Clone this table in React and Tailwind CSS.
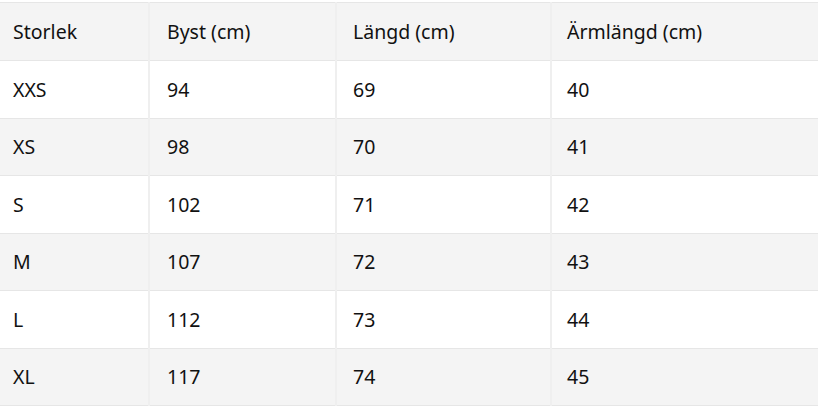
const headers = ["Storlek", "Byst (cm)", "Längd (cm)", "Ärmlängd (cm)"];

const rows = [
  ["XXS", "94", "69", "40"],
  ["XS", "98", "70", "41"],
  ["S", "102", "71", "42"],
  ["M", "107", "72", "43"],
  ["L", "112", "73", "44"],
  ["XL", "117", "74", "45"],
];

const widths = ["w-[149px]", "w-[187px]", "w-[215px]", "w-[267px]"];
const pads = ["pl-[13px]", "pl-[17px]", "pl-[16px]", "pl-[15px]"];

export default function App() {
  return (
    <div className="min-h-screen bg-white pt-[2px] font-['Noto_Sans','Open_Sans',sans-serif] text-[19.5px] text-[#111]">
      <table className="w-[818px] table-fixed border-collapse border-t border-[#e6e6e6]">
        <thead>
          <tr className="h-[58px] bg-[#f4f4f4] border-b border-[#e6e6e6]">
            {headers.map((h, i) => (
              <th
                key={h}
                className={`${widths[i]} ${pads[i]} text-left font-normal ${i > 0 ? "border-l-2 border-[#efefef]" : ""}`}
              >
                {h}
              </th>
            ))}
          </tr>
        </thead>
        <tbody>
          {rows.map((r, ri) => (
            <tr
              key={r[0]}
              className={`h-[57.5px] border-b border-[#e6e6e6] ${ri % 2 === 1 ? "bg-[#f4f4f4]" : "bg-white"}`}
            >
              {r.map((c, i) => (
                <td
                  key={i}
                  className={`${pads[i]} ${i > 0 ? "border-l-2 border-[#efefef]" : ""}`}
                >
                  {c}
                </td>
              ))}
            </tr>
          ))}
        </tbody>
      </table>
    </div>
  );
}
